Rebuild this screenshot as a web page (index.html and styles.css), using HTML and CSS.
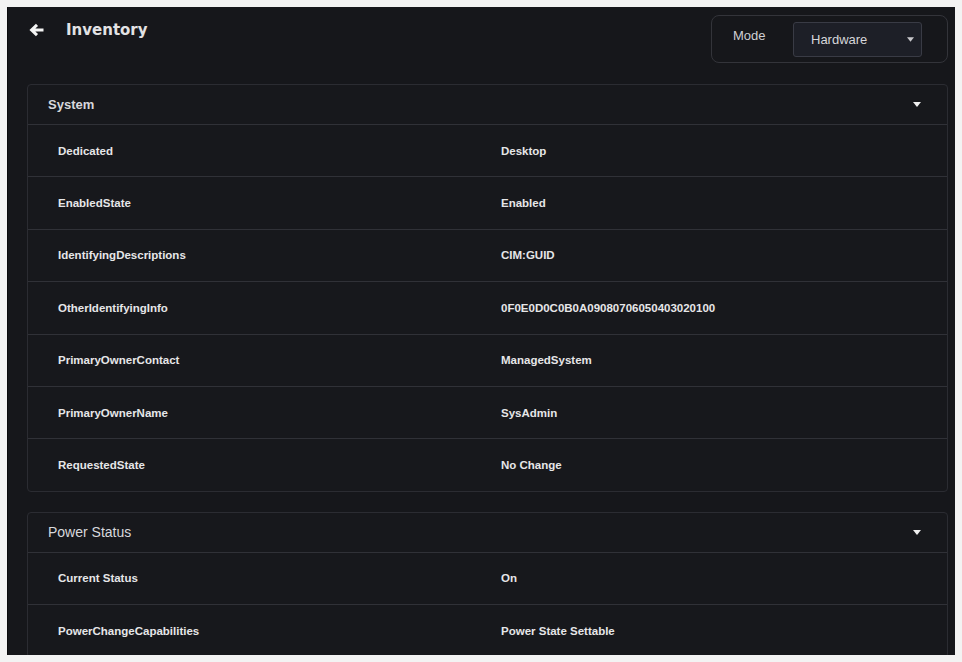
FILE: index.html
```html
<!DOCTYPE html>
<html lang="en">
<head>
  <meta charset="UTF-8">
  <meta name="viewport" content="width=device-width, initial-scale=1.0">
  <title>Inventory</title>
  <link rel="stylesheet" href="styles.css">
</head>
<body>

  <div class="panel">
    <div class="topbar">
      <div class="title">
        <svg class="back" viewBox="0 0 16 14" width="16" height="14"><path d="M14.5 7H3M8 1.8L2.6 7 8 12.2" fill="none" stroke="#f4f4f4" stroke-width="3" stroke-linejoin="miter"/></svg>
        <h1>Inventory</h1>
      </div>
      <div class="mode">
        <span class="mode-label">Mode</span>
        <div class="select">
          <span>Hardware</span>
          <svg viewBox="0 0 8 5" width="7" height="5"><path d="M0 0h8L4 5z" fill="#c8c8cc"/></svg>
        </div>
      </div>
    </div>

    <div class="card">
      <div class="card-head system">
        <span>System</span>
        <svg class="caret" viewBox="0 0 8 5" width="8" height="5"><path d="M0 0h8L4 5z" fill="#f0f0f0"/></svg>
      </div>
      <div class="row"><span>Dedicated</span><span>Desktop</span></div>
      <div class="row"><span>EnabledState</span><span>Enabled</span></div>
      <div class="row"><span>IdentifyingDescriptions</span><span>CIM:GUID</span></div>
      <div class="row"><span>OtherIdentifyingInfo</span><span>0F0E0D0C0B0A09080706050403020100</span></div>
      <div class="row"><span>PrimaryOwnerContact</span><span>ManagedSystem</span></div>
      <div class="row"><span>PrimaryOwnerName</span><span>SysAdmin</span></div>
      <div class="row"><span>RequestedState</span><span>No Change</span></div>
    </div>

    <div class="card">
      <div class="card-head">
        <span>Power Status</span>
        <svg class="caret" viewBox="0 0 8 5" width="8" height="5"><path d="M0 0h8L4 5z" fill="#f0f0f0"/></svg>
      </div>
      <div class="row"><span>Current Status</span><span>On</span></div>
      <div class="row"><span>PowerChangeCapabilities</span><span>Power State Settable</span></div>
    </div>
  </div>

</body>
</html>
```

FILE: styles.css
```css
body {
  margin: 7px;
  background-color: #f3f3f3;
  font-family: "Liberation Sans", Arial, sans-serif;
  color: #e4e4e6;
}
.panel {
  box-sizing: border-box;
  height: 648px;
  overflow: hidden;
  background-color: #16171b;
  border-left: 1px solid #0c0c0e;
  padding: 8px 7px 0 19px;
}
.topbar {
  display: flex;
  justify-content: space-between;
  align-items: flex-start;
  height: 48px;
  margin-bottom: 21px;
}
.title {
  display: flex;
  align-items: center;
  gap: 21px;
  height: 30px;
  padding-left: 2px;
}
.title h1 {
  margin: 0;
  font-family: "DejaVu Sans", sans-serif;
  font-size: 15px;
  font-weight: bold;
  color: #e2e2e4;
}
.mode {
  box-sizing: border-box;
  width: 237px;
  height: 48px;
  border: 1px solid #33343a;
  border-radius: 8px;
  display: flex;
  align-items: flex-start;
  padding: 6px 0 0 21px;
}
.mode-label {
  font-size: 13px;
  color: #cfcfd3;
  width: 60px;
  margin-top: 6px;
}
.select {
  box-sizing: border-box;
  width: 129px;
  height: 35px;
  background-color: #1d1f27;
  border: 1px solid #393b45;
  border-radius: 3px;
  display: flex;
  justify-content: space-between;
  align-items: center;
  padding: 0 7px 0 17px;
  font-size: 13px;
  color: #d6d6da;
}
.card {
  border: 1px solid #2b2c32;
  border-radius: 4px;
  margin-bottom: 20px;
  background-color: #17181c;
}
.card-head {
  display: flex;
  justify-content: space-between;
  align-items: center;
  height: 39px;
  padding: 0 26px 0 20px;
  font-size: 14px;
  color: #d8d8dc;
}
.card-head.system {
  font-size: 13px;
  font-weight: bold;
}
.row {
  display: grid;
  grid-template-columns: 443px 1fr;
  align-items: center;
  height: 51.4px;
  padding-left: 30px;
  border-top: 1px solid #303137;
  font-size: 11.5px;
  font-weight: bold;
  color: #e6e6e8;
}
```
